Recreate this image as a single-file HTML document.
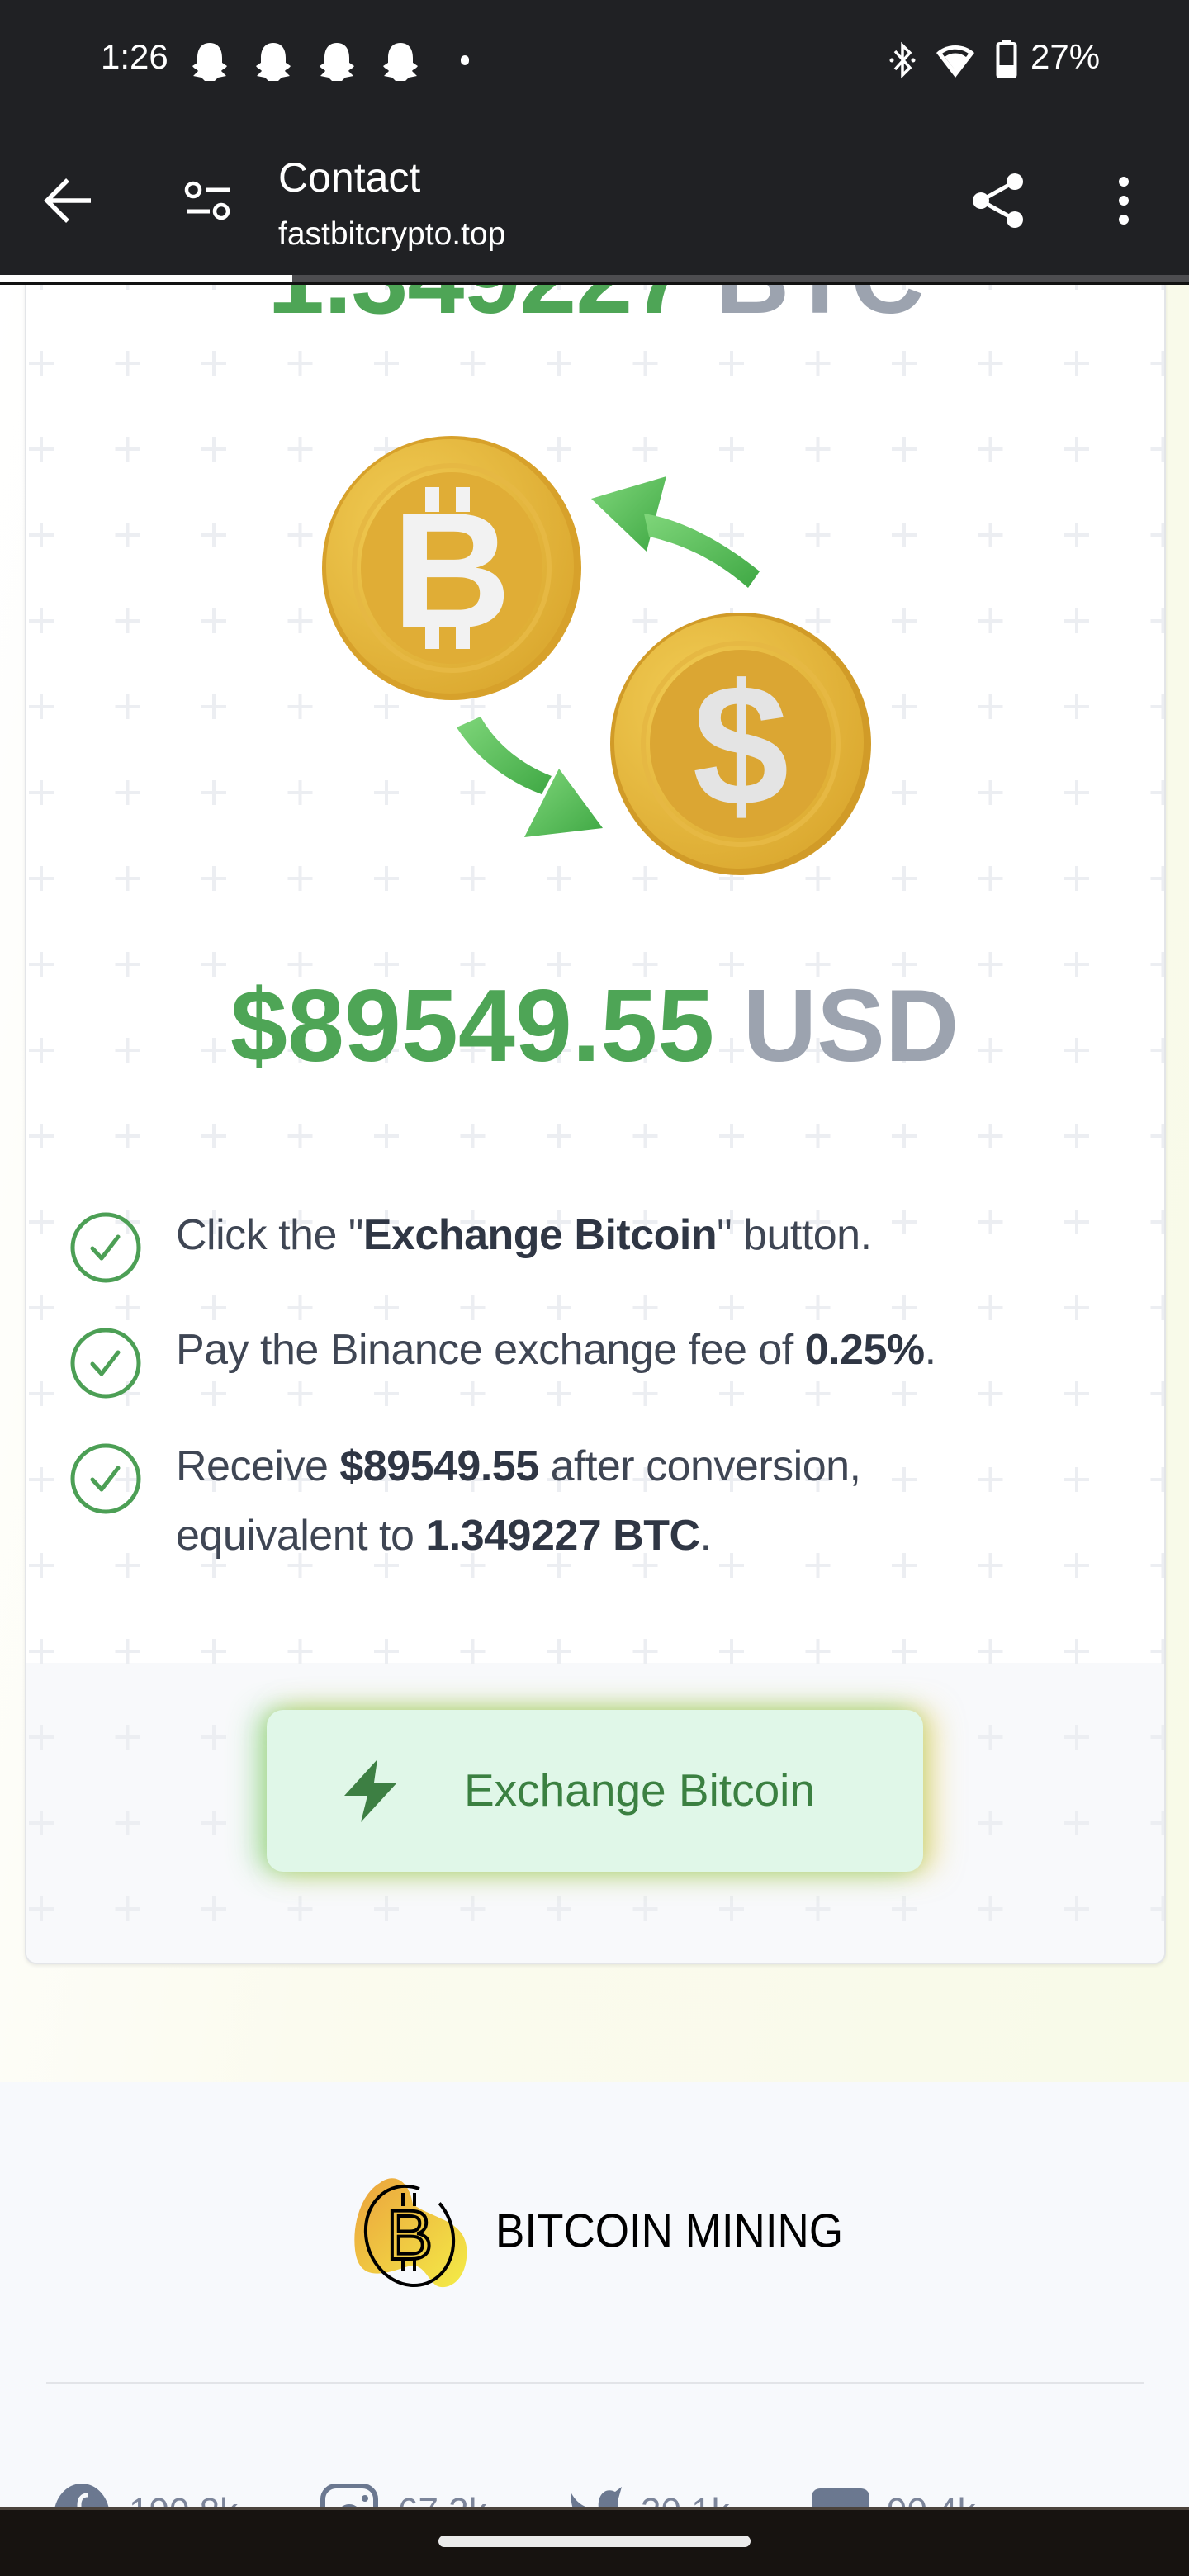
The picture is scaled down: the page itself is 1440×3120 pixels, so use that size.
<!DOCTYPE html>
<html><head><meta charset="utf-8">
<style>
*{margin:0;padding:0;box-sizing:border-box}
html,body{width:1440px;height:3120px;overflow:hidden;background:#fff;font-family:"Liberation Sans",sans-serif;position:relative}
.abs{position:absolute}
.top{left:0;top:0;width:1440px;height:333px;background:#202124;color:#fff}
.li{position:absolute;left:213px;font-size:52px;color:#3f4654;white-space:nowrap;line-height:84px;letter-spacing:-0.5px}
.li b{color:#2f3644}
.chk{position:absolute;left:84px;width:88px;height:88px}
</style></head><body>

<div class="abs" style="left:0;top:344px;width:1440px;height:2180px;background:linear-gradient(100deg,#ffffff 0%,#fbfbef 40%,#f8fae8 100%)"></div>
<div class="abs" style="left:30px;top:300px;width:1382px;height:2079px;background:#fff;border:2px solid #e3e5e8;border-top:none;border-radius:0 0 14px 14px;box-shadow:0 2px 4px rgba(0,0,0,0.08);overflow:hidden">
  <div class="abs" style="left:0;top:1714px;width:1382px;height:400px;background:#f8f9fb"></div>
  <svg class="abs" style="left:0;top:0" width="1382" height="2079">
    <defs><pattern id="p" x="-34" y="-16" width="104.5" height="104" patternUnits="userSpaceOnUse">
      <rect x="50" y="37" width="4" height="30" fill="#eceef2"/><rect x="37" y="50" width="30" height="4" fill="#eceef2"/>
    </pattern></defs>
    <rect width="1382" height="2079" fill="url(#p)"/>
  </svg>
</div>

<div class="abs" style="left:324px;top:262px;font-size:124px;font-weight:bold;line-height:150px;white-space:nowrap;color:#4ea556;letter-spacing:-1px">1.349227 <span style="color:#9ca3af">BTC</span></div>

<svg class="abs" style="left:0;top:0" width="1440" height="1100">
  <defs>
    <radialGradient id="g1" cx="0.35" cy="0.35" r="0.8"><stop offset="0" stop-color="#f2cd55"/><stop offset="1" stop-color="#d9a52c"/></radialGradient>
    <linearGradient id="ga" x1="0" y1="0" x2="1" y2="1"><stop offset="0" stop-color="#7fd67a"/><stop offset="1" stop-color="#3fa844"/></linearGradient>
  </defs>
  <ellipse cx="547" cy="688" rx="157" ry="160" fill="#d7a12b"/>
  <ellipse cx="545" cy="686" rx="150" ry="154" fill="url(#g1)"/>
  <ellipse cx="547" cy="688" rx="118" ry="124" fill="none" stroke="#e6b843" stroke-width="6"/>
  <ellipse cx="547" cy="688" rx="110" ry="116" fill="#e0ad36"/>
  <rect x="515" y="590" width="17" height="30" fill="#f2f2f2"/><rect x="552" y="590" width="17" height="30" fill="#f2f2f2"/>
  <rect x="515" y="756" width="17" height="30" fill="#f2f2f2"/><rect x="552" y="756" width="17" height="30" fill="#f2f2f2"/>
  <text x="547" y="760" font-family="Liberation Sans" font-weight="bold" font-size="200" fill="#f2f2f2" text-anchor="middle">B</text>
  <ellipse cx="897" cy="901" rx="158" ry="159" fill="#d19b28"/>
  <ellipse cx="895" cy="899" rx="151" ry="153" fill="url(#g1)"/>
  <ellipse cx="897" cy="901" rx="118" ry="122" fill="none" stroke="#e6b843" stroke-width="6"/>
  <ellipse cx="897" cy="901" rx="110" ry="114" fill="#dba633"/>
  <text x="897" y="975" font-family="Liberation Sans" font-weight="bold" font-size="210" fill="#e4e4e4" text-anchor="middle">$</text>
  <path d="M716 604 L807 577 L783 668 Z" fill="url(#ga)"/>
  <path d="M780 622 C830 630 880 660 920 692 L906 712 C870 680 830 660 786 650 Z" fill="url(#ga)"/>
  <path d="M553 881 L582 868 C600 900 630 925 668 940 L656 962 C610 945 575 915 553 881 Z" fill="url(#ga)"/>
  <path d="M677 931 L730 1003 L635 1014 Z" fill="url(#ga)"/>
</svg>

<div class="abs" style="left:279px;top:1168px;font-size:124px;font-weight:bold;line-height:150px;white-space:nowrap;color:#4ea556">$89549.55 <span style="color:#9ca3af">USD</span></div>

<svg class="chk" style="top:1467px" viewBox="0 0 88 88"><circle cx="44" cy="44" r="40" fill="none" stroke="#4c9f55" stroke-width="5"/><path d="M28 45 L39 57 L59 31" fill="none" stroke="#4c9f55" stroke-width="5" stroke-linecap="round" stroke-linejoin="round"/></svg>
<svg class="chk" style="top:1607px" viewBox="0 0 88 88"><circle cx="44" cy="44" r="40" fill="none" stroke="#4c9f55" stroke-width="5"/><path d="M28 45 L39 57 L59 31" fill="none" stroke="#4c9f55" stroke-width="5" stroke-linecap="round" stroke-linejoin="round"/></svg>
<svg class="chk" style="top:1747px" viewBox="0 0 88 88"><circle cx="44" cy="44" r="40" fill="none" stroke="#4c9f55" stroke-width="5"/><path d="M28 45 L39 57 L59 31" fill="none" stroke="#4c9f55" stroke-width="5" stroke-linecap="round" stroke-linejoin="round"/></svg>
<div class="li" style="top:1454px">Click the "<b>Exchange Bitcoin</b>" button.</div>
<div class="li" style="top:1593px">Pay the Binance exchange fee of <b>0.25%</b>.</div>
<div class="li" style="top:1734px">Receive <b>$89549.55</b> after conversion,<br>equivalent to <b>1.349227 BTC</b>.</div>

<div class="abs" style="left:323px;top:2071px;width:795px;height:196px;border-radius:20px;background:#e0f7e8;box-shadow:-14px 0 34px rgba(90,200,90,0.45),14px 0 34px rgba(230,200,60,0.5),0 0 20px rgba(150,200,80,0.3)">
  <svg class="abs" style="left:90px;top:58px" width="72" height="80" viewBox="0 0 72 80"><path d="M44 2 L4 46 L32 46 L24 78 L68 30 L40 30 Z" fill="#3d7f43"/></svg>
  <div class="abs" style="left:239px;top:62px;font-size:55px;line-height:70px;color:#3b8041;white-space:nowrap">Exchange Bitcoin</div>
</div>

<div class="abs" style="left:0;top:2522px;width:1440px;height:600px;background:#f7f9fc"></div>
<svg class="abs" style="left:420px;top:2630px" width="160" height="150">
  <defs><linearGradient id="lg" x1="0" y1="0" x2="1" y2="1"><stop offset="0" stop-color="#eba23d"/><stop offset="1" stop-color="#f4ec47"/></linearGradient></defs>
  <path d="M40 14 C55 2 75 8 80 40 C110 60 150 60 145 105 C142 135 120 145 108 138 C98 130 92 112 78 114 C55 120 15 140 10 95 C6 60 20 25 40 14 Z" fill="url(#lg)"/>
  <ellipse cx="76" cy="78" rx="52" ry="61" fill="none" stroke="#000" stroke-width="4" stroke-dasharray="300 30" transform="rotate(-20 76 78)"/>
  <text x="76" y="106" font-family="Liberation Sans" font-size="84" fill="none" stroke="#000" stroke-width="4" text-anchor="middle">B</text>
  <line x1="68" y1="26" x2="68" y2="42" stroke="#000" stroke-width="4"/><line x1="82" y1="26" x2="82" y2="42" stroke="#000" stroke-width="4"/>
  <line x1="68" y1="104" x2="68" y2="120" stroke="#000" stroke-width="4"/><line x1="82" y1="104" x2="82" y2="120" stroke="#000" stroke-width="4"/>
</svg>
<div class="abs" style="left:600px;top:2670px;font-size:53px;line-height:66px;color:#000;white-space:nowrap;transform:scaleY(1.08)">BITCOIN MINING</div>
<div class="abs" style="left:56px;top:2885px;width:1330px;height:3px;background:#e2e4e8"></div>

<svg class="abs" style="left:64px;top:3008px" width="70" height="40"><ellipse cx="35" cy="40" rx="34" ry="40" fill="#6b7890"/><path d="M42 14 C34 14 32 20 32 26 L32 40 L40 40" fill="none" stroke="#f7f9fc" stroke-width="5"/></svg>
<div class="abs" style="left:156px;top:3012px;font-size:44px;color:#7c859a;line-height:60px">190.8k</div>
<svg class="abs" style="left:388px;top:3008px" width="70" height="40"><rect x="3" y="3" width="64" height="64" rx="16" fill="none" stroke="#6b7890" stroke-width="6"/><circle cx="35" cy="40" r="12" fill="none" stroke="#6b7890" stroke-width="6"/><circle cx="54" cy="18" r="4" fill="#6b7890"/></svg>
<div class="abs" style="left:482px;top:3012px;font-size:44px;color:#7c859a;line-height:60px">67.2k</div>
<svg class="abs" style="left:689px;top:3008px" width="66" height="40"><path d="M2 10 C10 26 24 32 36 30 C34 14 44 4 56 10 L64 4 L60 18 C60 30 58 36 56 40 L8 40 C4 30 2 20 2 10 Z" fill="#6b7890"/></svg>
<div class="abs" style="left:776px;top:3012px;font-size:44px;color:#7c859a;line-height:60px">30.1k</div>
<svg class="abs" style="left:983px;top:3014px" width="70" height="30"><rect x="0" y="0" width="70" height="60" rx="10" fill="#6b7890"/></svg>
<div class="abs" style="left:1074px;top:3012px;font-size:44px;color:#7c859a;line-height:60px">90.4k</div>

<div class="abs" style="left:0;top:3036px;width:1440px;height:84px;background:#171310;border-top:4px solid #4b433c"></div>
<div class="abs" style="left:531px;top:3071px;width:378px;height:14px;border-radius:7px;background:#ebebeb"></div>

<div class="abs top">
  <div class="abs" style="left:122px;top:44px;font-size:42px;line-height:50px">1:26</div>
  <svg class="abs" style="left:230px;top:50px" width="300" height="48" viewBox="0 0 300 48">
    <g fill="#fff">
      <path id="gh" d="M24 2 C12 2 9 12 9 20 L9 26 L3 30 C6 34 9 34 10 36 L4 42 L14 44 L18 48 L30 48 L34 44 L44 42 L38 36 C39 34 42 34 45 30 L39 26 L39 20 C39 12 36 2 24 2 Z"/>
      <use href="#gh" x="77"/><use href="#gh" x="154"/><use href="#gh" x="231"/>
    </g>
  </svg>
  <div class="abs" style="left:558px;top:67px;width:10px;height:12px;border-radius:5px;background:#fff"></div>
  <svg class="abs" style="left:1076px;top:50px" width="34" height="46" viewBox="0 0 34 46"><path d="M8 12 L26 32 L17 41 L17 5 L26 14 L8 34" fill="none" stroke="#fff" stroke-width="3.5"/><circle cx="4" cy="23" r="2.5" fill="#fff"/><circle cx="30" cy="23" r="2.5" fill="#fff"/></svg>
  <svg class="abs" style="left:1132px;top:50px" width="50" height="46" viewBox="0 0 50 46"><path d="M25 44 L2 14 C14 2 36 2 48 14 Z" fill="#fff"/><path d="M25 35 L9 15 C18 8 32 8 41 15 L38 19 C30 13 20 13 12 19 Z" fill="#202124"/></svg>
  <svg class="abs" style="left:1206px;top:48px" width="26" height="48" viewBox="0 0 26 48"><rect x="8" y="0" width="10" height="5" fill="#fff"/><rect x="2.5" y="5" width="21" height="40" rx="2" fill="none" stroke="#fff" stroke-width="4"/><rect x="4" y="31" width="18" height="13" fill="#fff"/></svg>
  <div class="abs" style="left:1248px;top:44px;font-size:42px;line-height:50px">27%</div>

  <svg class="abs" style="left:50px;top:210px" width="66" height="66" viewBox="0 0 66 66"><path d="M60 33 L8 33 M32 8 L7 33 L32 58" fill="none" stroke="#fff" stroke-width="5.5"/></svg>
  <svg class="abs" style="left:222px;top:218px" width="62" height="50" viewBox="0 0 62 50"><circle cx="12" cy="12" r="8" fill="none" stroke="#fff" stroke-width="4.5"/><line x1="28" y1="12" x2="56" y2="12" stroke="#fff" stroke-width="5"/><line x1="4" y1="38" x2="32" y2="38" stroke="#fff" stroke-width="5"/><circle cx="46" cy="38" r="8" fill="none" stroke="#fff" stroke-width="4.5"/></svg>
  <div class="abs" style="left:337px;top:183px;font-size:50px;line-height:64px">Contact</div>
  <div class="abs" style="left:337px;top:258px;font-size:39px;line-height:52px">fastbitcrypto.top</div>
  <svg class="abs" style="left:1172px;top:206px" width="74" height="74" viewBox="0 0 74 74"><circle cx="57" cy="14" r="10" fill="#fff"/><circle cx="16" cy="37" r="10" fill="#fff"/><circle cx="57" cy="60" r="10" fill="#fff"/><path d="M57 14 L16 37 L57 60" fill="none" stroke="#fff" stroke-width="5"/></svg>
  <div class="abs" style="left:1355px;top:214px;width:12px;height:12px;border-radius:6px;background:#fff"></div>
  <div class="abs" style="left:1355px;top:237px;width:12px;height:12px;border-radius:6px;background:#fff"></div>
  <div class="abs" style="left:1355px;top:260px;width:12px;height:12px;border-radius:6px;background:#fff"></div>
</div>
<div class="abs" style="left:0;top:333px;width:1440px;height:8px;background:#4d4d50"></div>
<div class="abs" style="left:0;top:333px;width:354px;height:8px;background:#fff"></div>
<div class="abs" style="left:0;top:341px;width:1440px;height:4px;background:#111"></div>
</body></html>
